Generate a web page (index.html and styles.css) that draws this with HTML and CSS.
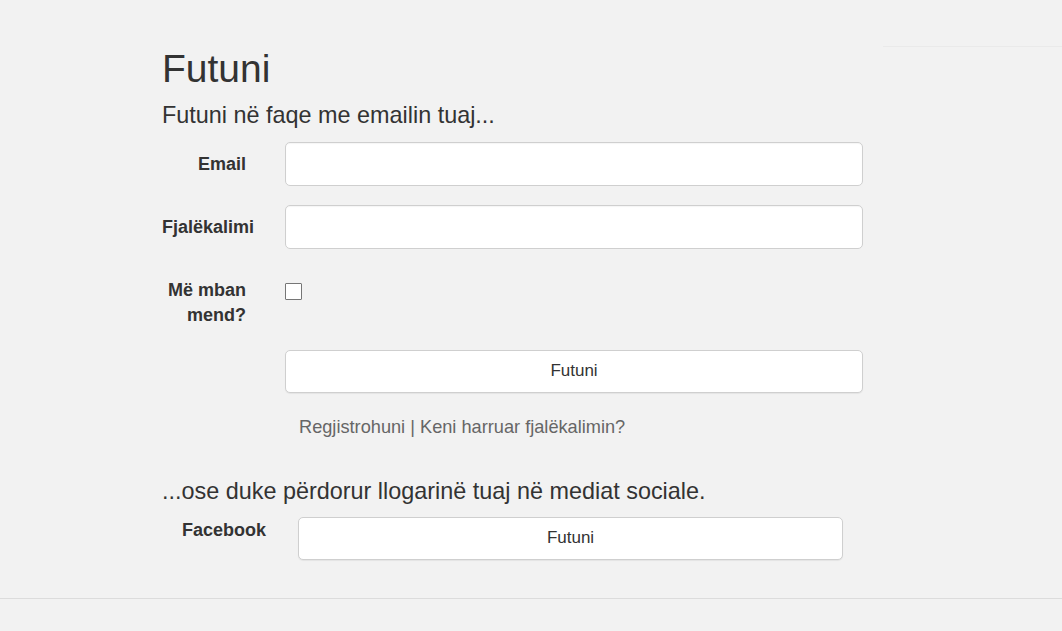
FILE: index.html
```html
<!DOCTYPE html>
<html lang="sq">
<head>
<meta charset="utf-8">
<title>Futuni</title>
<link rel="stylesheet" href="styles.css">
</head>
<body>
<header class="topbar"><div class="topbar-line"></div></header>
<main class="page">
  <h1 class="title">Futuni</h1>
  <h3 class="subtitle">Futuni në faqe me emailin tuaj...</h3>
  <form class="login-form">
    <div class="form-row">
      <label class="form-label" for="email">Email</label>
      <input class="form-input" id="email" type="email">
    </div>
    <div class="form-row">
      <label class="form-label" for="pass">Fjalëkalimi</label>
      <input class="form-input" id="pass" type="password">
    </div>
    <div class="form-row form-row-check">
      <label class="form-label" for="remember">Më mban mend?</label>
      <input class="form-check" id="remember" type="checkbox">
    </div>
    <div class="form-row form-row-btn">
      <span class="form-label"></span>
      <button class="btn" type="button">Futuni</button>
    </div>
    <div class="form-row">
      <span class="form-label"></span>
      <p class="links"><a href="#">Regjistrohuni</a> | <a href="#">Keni harruar fjalëkalimin?</a></p>
    </div>
  </form>
  <h3 class="subtitle social-title">...ose duke përdorur llogarinë tuaj në mediat sociale.</h3>
  <div class="social-row">
    <span class="social-label">Facebook</span>
    <button class="btn btn-social" type="button">Futuni</button>
  </div>
</main>
<footer class="footer"></footer>
</body>
</html>
```

FILE: styles.css
```css
html, body {
  margin: 0;
  padding: 0;
  background: #f2f2f2;
  color: #333;
  font-family: "Liberation Sans", Arial, sans-serif;
  font-size: 18px;
  line-height: 1.428571;
}

.topbar {
  height: 47px;
  display: flex;
  justify-content: flex-end;
  align-items: flex-end;
}

.topbar-line {
  width: 179px;
  height: 1px;
  background: #eaeaea;
}

.page {
  padding-left: 162px;
  width: 702px;
}

.title {
  margin: 1px 0 0;
  font-size: 39px;
  font-weight: normal;
  line-height: 1.1;
}

.subtitle {
  margin: 12px 0 0;
  font-size: 23.4px;
  font-weight: normal;
  line-height: 1.1;
}

.login-form {
  margin-top: 13px;
}

.form-row {
  display: grid;
  grid-template-columns: 84px 578px;
  column-gap: 39px;
  margin-bottom: 19px;
}

.form-row-check {
  margin-bottom: 21px;
}

.form-row-btn {
  margin-bottom: 21px;
}

.form-label {
  font-weight: bold;
  text-align: right;
  padding-top: 10px;
}

.form-input {
  box-sizing: border-box;
  height: 44px;
  width: 100%;
  margin: 0;
  border: 1px solid #cfcfcf;
  border-radius: 5px;
  background: #fff;
  box-shadow: inset 0 1px 1px rgba(0,0,0,0.04);
  font: inherit;
  padding: 0 12px;
}

.form-check {
  appearance: none;
  -webkit-appearance: none;
  width: 17px;
  height: 17px;
  margin: 15px 0 0;
  border: 1px solid #767676;
  border-radius: 1px;
  background: #fff;
}

.btn {
  box-sizing: border-box;
  height: 43px;
  width: 100%;
  margin: 0;
  border: 1px solid #cfcfcf;
  border-radius: 5px;
  background: #fff;
  box-shadow: 0 1px 1px rgba(0,0,0,0.06);
  color: #333;
  font: inherit;
  font-size: 17px;
  cursor: pointer;
}

.links {
  margin: 0;
  padding: 0 0 0 14px;
  color: #666;
  font-size: 18.2px;
}

.links a {
  color: #666;
  text-decoration: none;
}

.form-row:last-child {
  margin-bottom: 0;
}

.social-title {
  margin-top: 39px;
}

.social-row {
  display: grid;
  grid-template-columns: 104px 545px;
  column-gap: 32px;
  margin-top: 12px;
  padding-bottom: 38px;
}

.social-label {
  font-weight: bold;
  text-align: right;
  padding-top: 1px;
}

.footer {
  border-top: 1px solid #dcdcdc;
  height: 32px;
}
```
